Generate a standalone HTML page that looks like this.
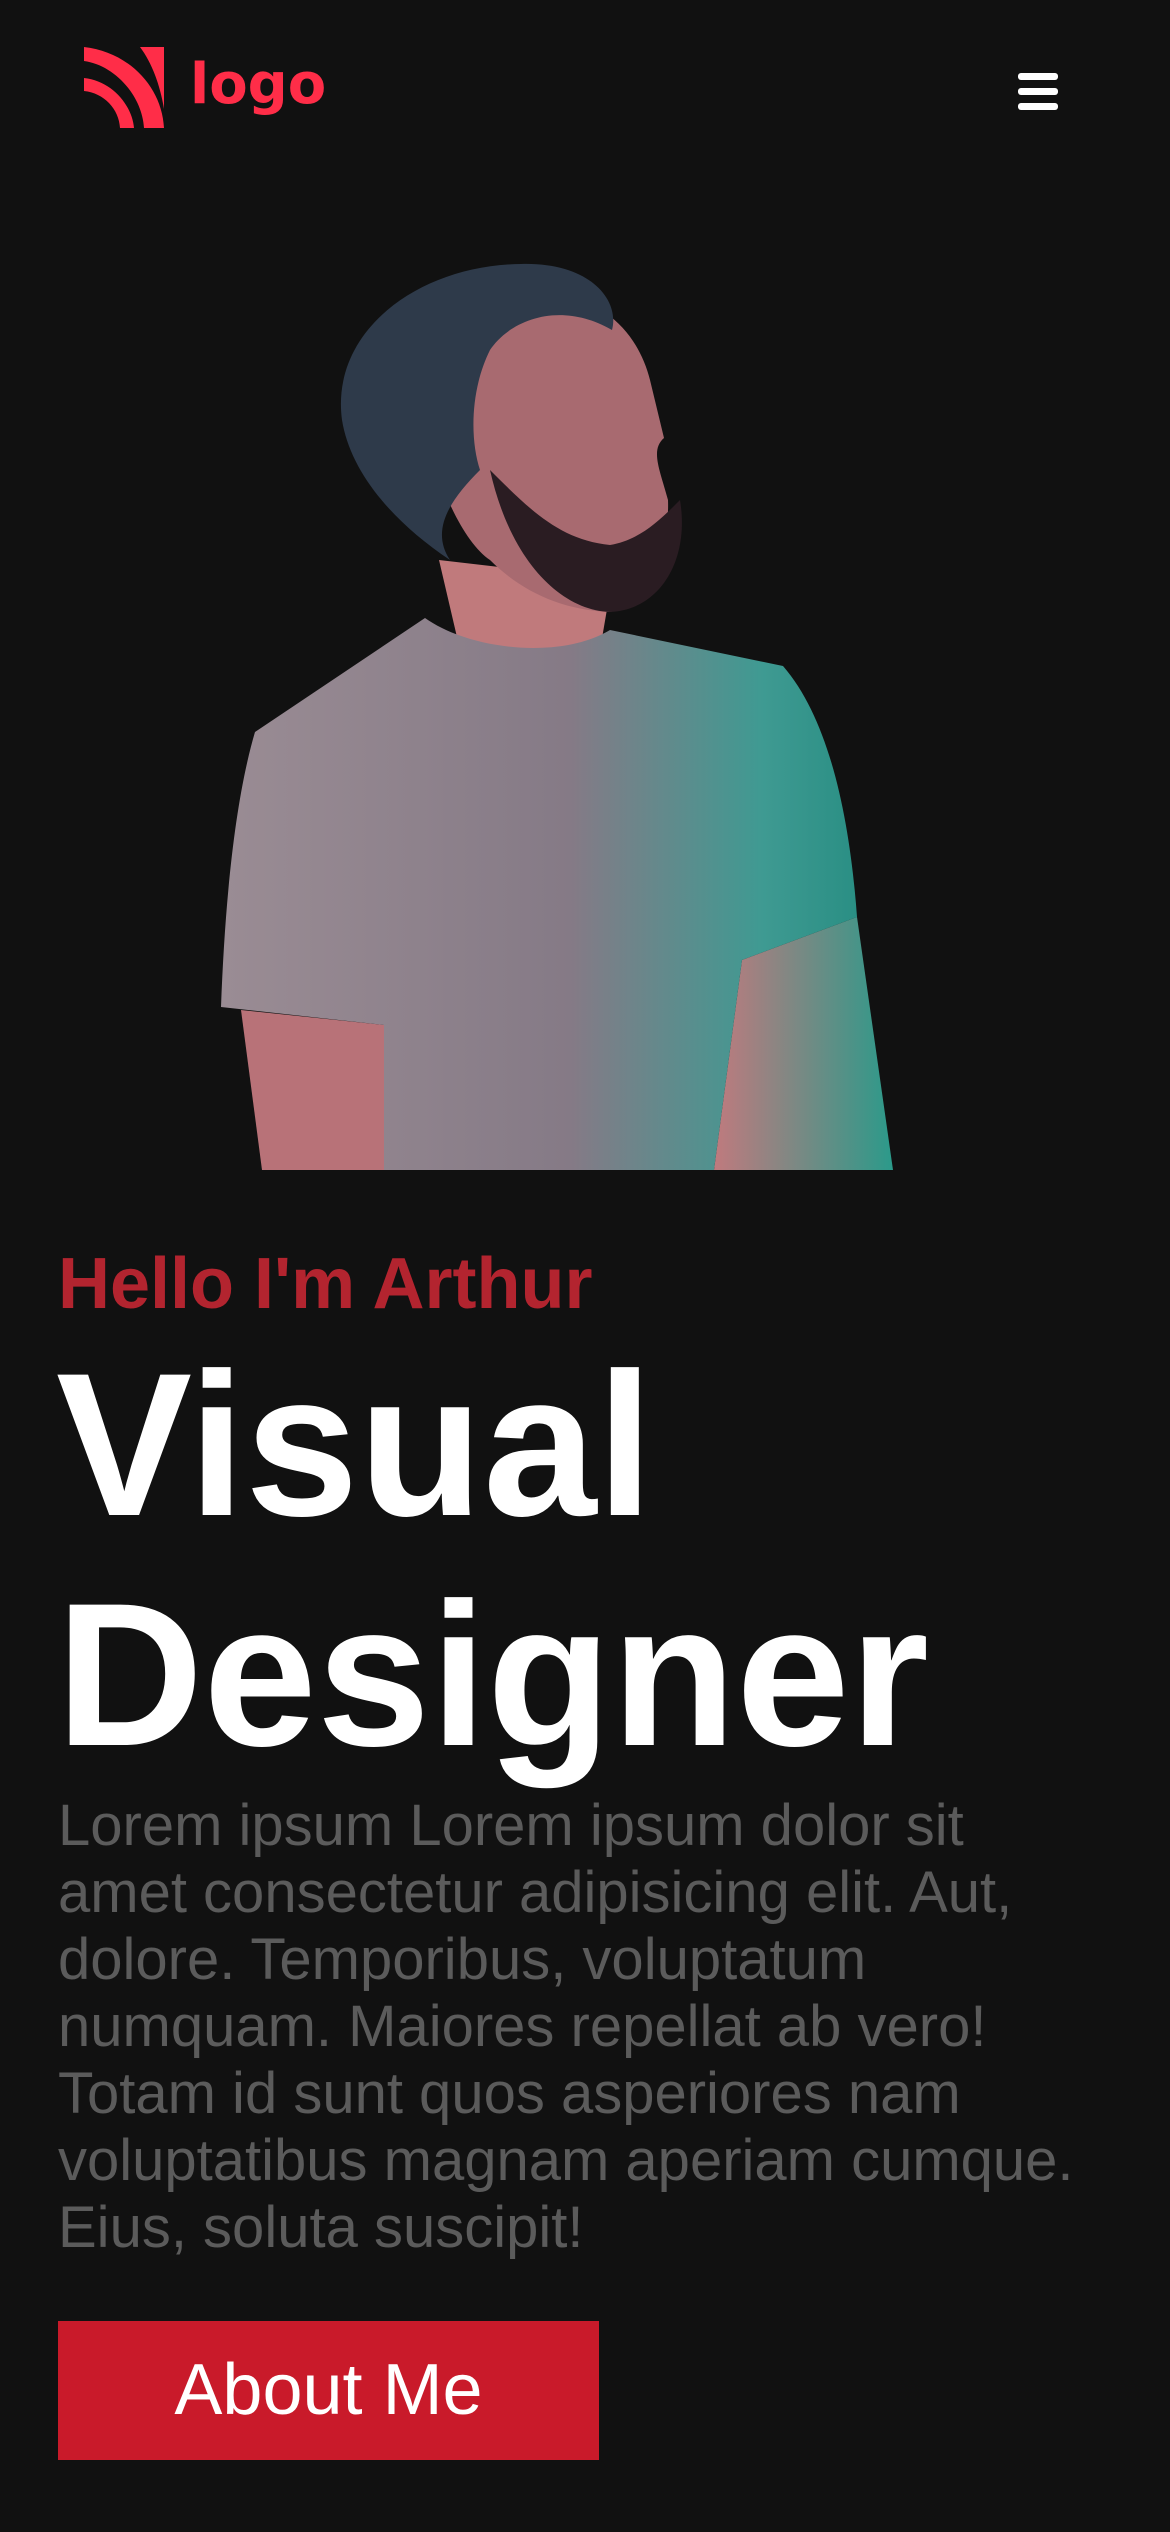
<!DOCTYPE html>
<html><head><meta charset="utf-8"><style>
html,body{margin:0;padding:0;background:#111;}
body{width:1170px;height:2532px;position:relative;overflow:hidden;font-family:"Liberation Sans",Arial,sans-serif;}
.abs{position:absolute;}
.hello{left:58px;top:1242px;font-size:72px;font-weight:bold;color:#b3242f;line-height:84px;white-space:nowrap;}
.title{left:56px;top:1330px;font-size:204px;font-weight:bold;color:#fff;line-height:230px;}
.para{left:58px;top:1792px;width:1040px;font-size:58px;line-height:67px;color:#5b5b5b;}
.btn{left:58px;top:2321px;width:541px;height:139px;background:#c91a2a;color:#fff;font-size:72px;text-align:center;line-height:139px;}
</style></head><body>
<svg class="abs" style="left:84px;top:47px" width="84" height="82" viewBox="0 0 84 82">
<path d="M0 0 C45 5 78 40 80 81 L60 81 C58 48 30 18 0 14 Z" fill="#ff2d48"/>
<path d="M0 31 C28 34 48 58 50 81 L36 81 C35 62 20 46 0 44 Z" fill="#ff2d48"/>
<path d="M56 0 L80 0 L80 62 C76 38 68 16 56 0 Z" fill="#ff2d48"/>
</svg>
<div class="abs" style="left:190px;top:50px;font-size:56px;font-weight:bold;color:#ff2d48;font-family:'DejaVu Sans',sans-serif;line-height:70px;">logo</div>
<div class="abs" style="left:1018px;top:73px;width:40px;height:7px;background:#fff;border-radius:3px"></div>
<div class="abs" style="left:1018px;top:88px;width:40px;height:7px;background:#fff;border-radius:3px"></div>
<div class="abs" style="left:1018px;top:103px;width:40px;height:7px;background:#fff;border-radius:3px"></div>
<svg class="abs" style="left:0;top:0" width="1170" height="1172" viewBox="0 0 1170 1172">
<defs>
<linearGradient id="sh" x1="0" x2="1" y1="0" y2="0">
<stop offset="0" stop-color="#9a8c94"/><stop offset="0.55" stop-color="#857a86"/><stop offset="0.85" stop-color="#3f9a92"/><stop offset="1" stop-color="#2a8f84"/></linearGradient>
<linearGradient id="sk" x1="0" x2="1"><stop offset="0" stop-color="#c07a7e"/><stop offset="1" stop-color="#2b9a8a"/></linearGradient>
</defs>
<path d="M241 1010 L384 1025 L384 1170 L262 1170 Z" fill="#b87278"/>
<path d="M742 960 L857 917 L893 1170 L714 1170 Z" fill="url(#sk)"/>
<path d="M439 560 L612 580 L600 650 L460 650 Z" fill="#c07a7c"/>
<path d="M255 732 L425 618 C470 650 560 660 610 630 L783 666 C830 720 850 820 857 917 L742 960 L714 1170 L384 1170 L384 1025 L221 1007 C225 900 235 800 255 732 Z" fill="url(#sh)"/>
<path d="M420 400 C430 330 500 300 560 300 C610 300 640 340 650 380 L664 438 C650 450 660 470 668 500 C670 560 640 605 610 612 C560 610 520 590 490 560 C460 540 430 470 420 400 Z" fill="#a86a70"/>
<path d="M342 420 C330 330 420 265 521 264 C590 262 620 300 612 330 C560 300 510 320 490 350 C470 390 470 440 480 470 C450 500 430 530 450 560 C390 520 350 470 342 420 Z" fill="#2e3a4a"/>
<path d="M490 470 C530 510 560 540 610 545 C640 540 660 520 680 500 C690 560 660 610 610 612 C560 610 510 560 490 470 Z" fill="#2a1c22"/>
</svg>
<div class="abs hello">Hello I'm Arthur</div>
<div class="abs title">Visual<br>Designer</div>
<div class="abs para">Lorem ipsum Lorem ipsum dolor sit amet consectetur adipisicing elit. Aut, dolore. Temporibus, voluptatum numquam. Maiores repellat ab vero! Totam id sunt quos asperiores nam voluptatibus magnam aperiam cumque. Eius, soluta suscipit!</div>
<div class="abs btn">About Me</div>
</body></html>
